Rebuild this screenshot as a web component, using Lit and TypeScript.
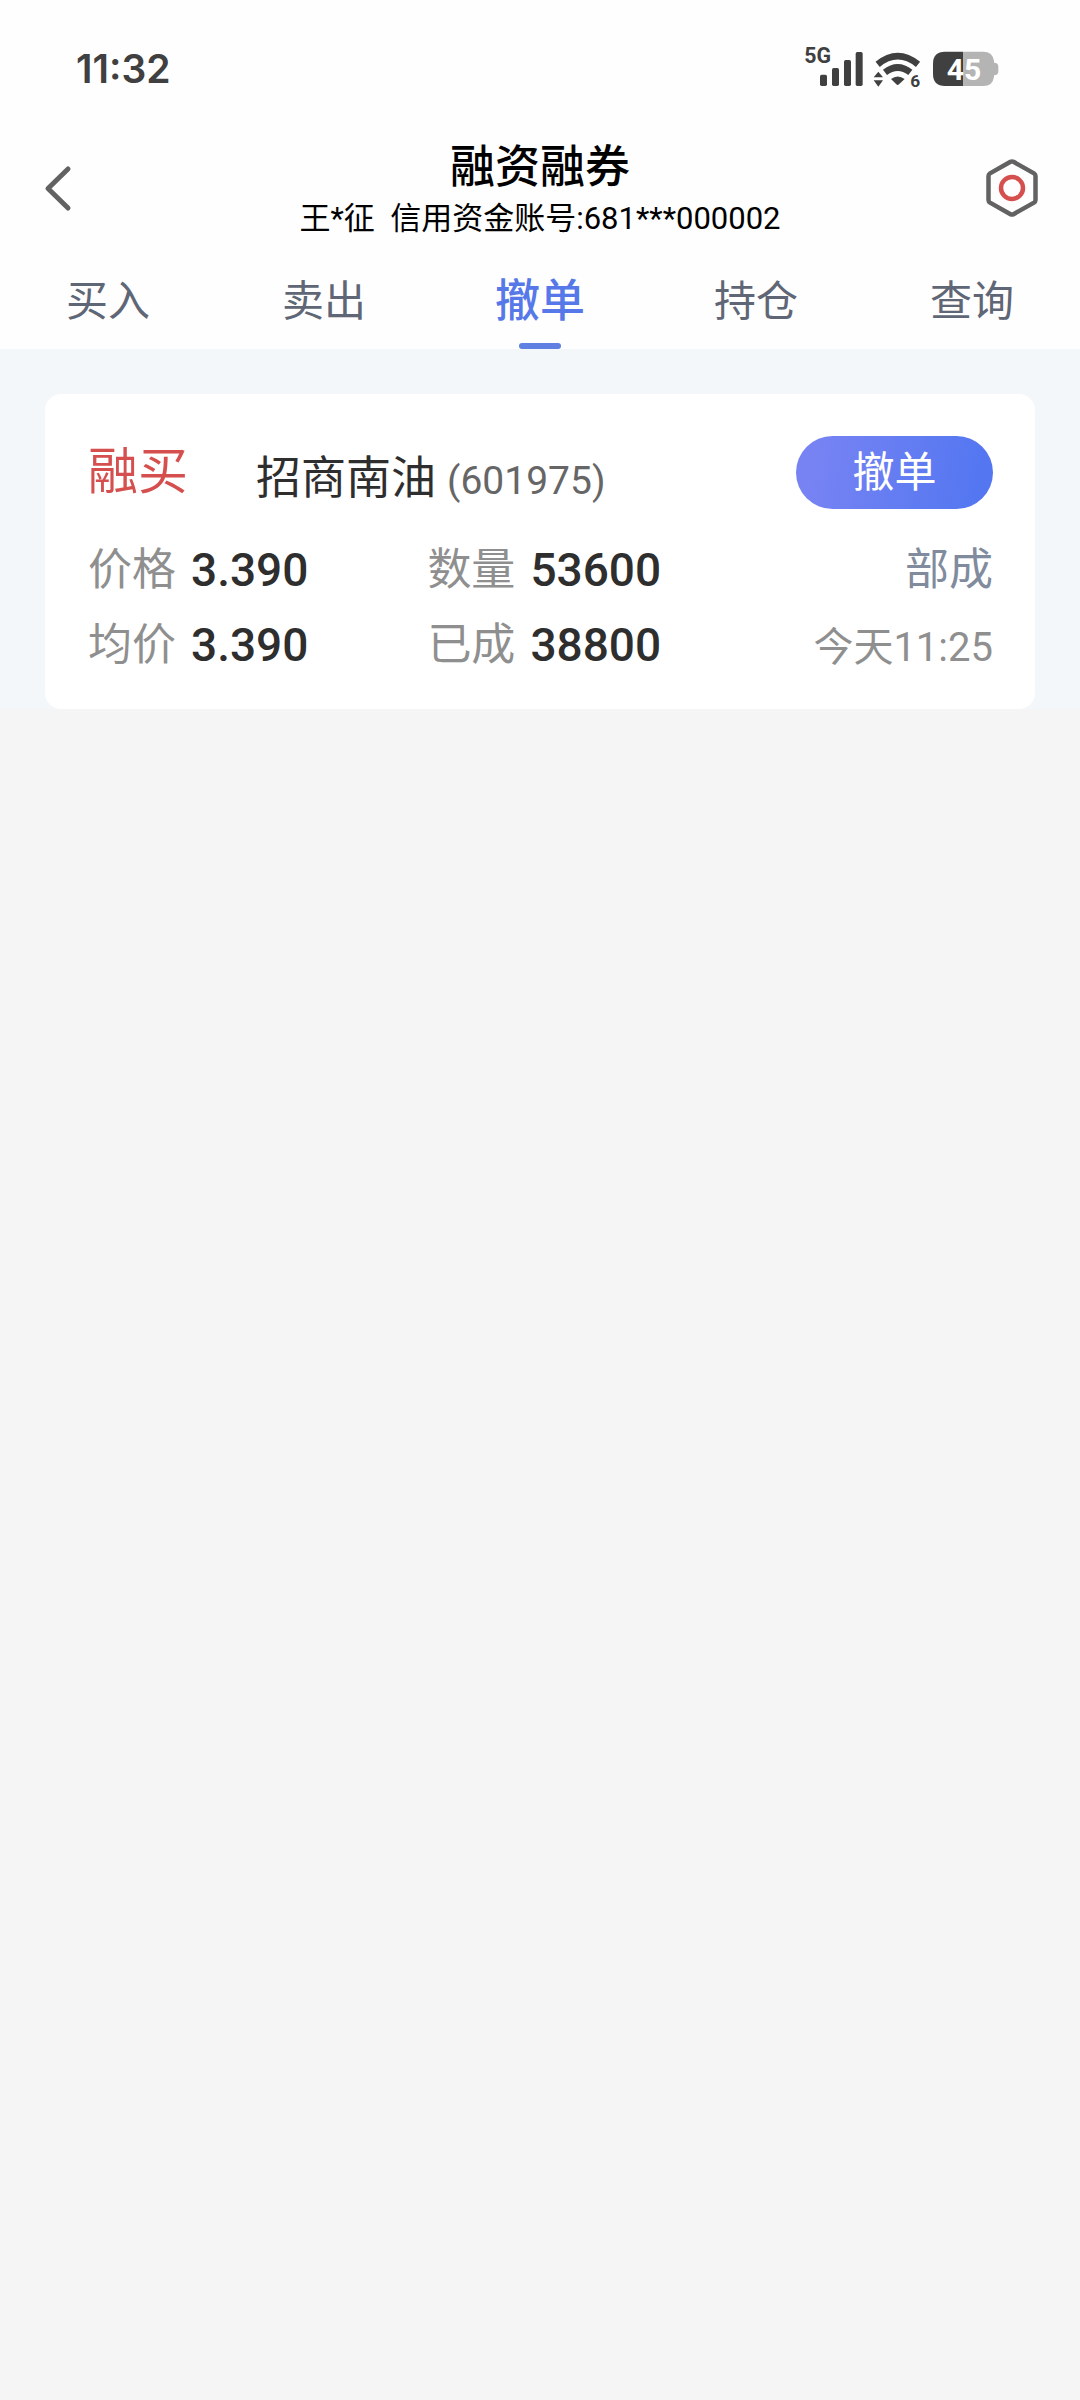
import { LitElement, html, css } from "lit";
import { customElement, property, state } from "lit/decorators.js";
import { classMap } from "lit/directives/class-map.js";

interface Order {
  side: string;
  name: string;
  code: string;
  price: string;
  quantity: string;
  average: string;
  filled: string;
  status: string;
  time: string;
}

const TABS = ["买入", "卖出", "撤单", "持仓", "查询"];

const ORDERS: Order[] = [
  {
    side: "融买",
    name: "招商南油",
    code: "601975",
    price: "3.390",
    quantity: "53600",
    average: "3.390",
    filled: "38800",
    status: "部成",
    time: "今天11:25",
  },
];

@customElement("status-bar")
export class StatusBar extends LitElement {
  static styles = css`
    :host {
      display: flex;
      align-items: center;
      justify-content: space-between;
      height: 136px;
      padding: 2px 81px 0 76px;
      box-sizing: border-box;
      color: #404040;
    }
    .clock {
      font: 600 39px/48px Inter, Roboto, sans-serif;
    }
    .icons {
      display: flex;
      gap: 11px;
    }
    .icon {
      display: block;
      height: 50px;
      fill: currentColor;
      overflow: visible;
    }
    .signal {
      width: 59px;
    }
    .wifi {
      width: 47px;
    }
    .battery {
      width: 67px;
    }
    .glyph {
      font-family: Roboto, sans-serif;
      font-weight: 700;
    }
    .network {
      font-size: 64px;
    }
    .generation {
      font-size: 52px;
    }
    .level {
      font-size: 90px;
      fill: #fff;
    }
    .rest {
      fill: #b4b4b4;
    }
    .arc {
      fill: none;
      stroke: currentColor;
      stroke-width: 20;
    }
  `;

  render() {
    return html`
      <time class="clock">11:32</time>
      <div class="icons">
        <svg class="icon signal" viewBox="72 42 177 150" role="img" aria-label="5G">
          <text class="glyph network" x="73" y="99">5G</text>
          <rect x="120" y="134" width="21" height="34" rx="5" />
          <rect x="156" y="114" width="21" height="54" rx="5" />
          <rect x="192" y="90" width="21" height="78" rx="5" />
          <rect x="227" y="66" width="21" height="102" rx="5" />
        </svg>
        <svg class="icon wifi" viewBox="282 42 141 150" role="img" aria-label="Wi-Fi 6">
          <path class="arc" d="M293 103Q353 54 414 103" />
          <path class="arc" d="M315 127Q353 98 391 127" />
          <path d="M333 147Q353 132 374 147L357 163Q353 167 349 163Z" />
          <path d="M295 125L309 142H281ZM281 151H309L295 170Z" />
          <text class="glyph generation" x="391" y="172">6</text>
        </svg>
        <svg class="icon battery" viewBox="456 42 201 150" role="img" aria-label="45%">
          <path
            class="rest"
            d="M549 65H610Q638 65 642 93V98Q655 98 655 110V124Q655 136 642 136V140Q638 168 610 168H549Z"
          />
          <path d="M549 65H495Q459 65 459 101V132Q459 168 495 168H549Z" />
          <text class="glyph level" x="552" y="149" text-anchor="middle">45</text>
        </svg>
      </div>
    `;
  }
}

@customElement("order-card")
export class OrderCard extends LitElement {
  @property({ attribute: false }) order!: Order;

  static styles = css`
    :host {
      display: block;
      padding: 42px 42px 26px 43px;
      border-radius: 16px;
      background: #fff;
    }
    .head {
      display: flex;
      align-items: center;
      margin-bottom: 24px;
    }
    .side {
      flex: none;
      width: 168px;
      font-size: 50px;
      line-height: 73px;
      color: #d64f4f;
    }
    .stock {
      flex: 1;
      margin: 0;
      padding-top: 12px;
      font-size: 45px;
      font-weight: 400;
      line-height: 61px;
      color: #2e2e2e;
    }
    .code {
      margin-left: 11px;
      font-size: 39px;
      line-height: 40px;
      color: #666;
    }
    .cancel {
      width: 197px;
      height: 73px;
      padding: 0 0 8px;
      border: 0;
      border-radius: 37px;
      background: linear-gradient(100deg, #7783f3 10%, #5477f1 90%);
      color: #fff;
      font: inherit;
      font-size: 42px;
    }
    .facts {
      display: grid;
      grid-template-columns: 3fr 3fr 2fr;
      margin: 0;
      line-height: 75px;
    }
    .fact {
      display: flex;
      gap: 15px;
      white-space: nowrap;
    }
    .label {
      font-size: 44px;
      color: #8f8f8f;
    }
    .value {
      margin: 0;
      font-size: 46px;
      font-weight: 500;
      color: #2e2e2e;
    }
    .note {
      justify-content: flex-end;
    }
    .status {
      margin: 0;
      font-size: 44px;
      color: #818b9e;
    }
    .time {
      margin: 0;
      padding-top: 4px;
      font-size: 40px;
      line-height: 71px;
      color: #8f8f8f;
    }
  `;

  private fact(label: string, value: string) {
    return html`<div class="fact">
      <dt class="label">${label}</dt>
      <dd class="value">${value}</dd>
    </div>`;
  }

  render() {
    const o = this.order;
    return html`
      <div class="head">
        <span class="side">${o.side}</span>
        <h2 class="stock">${o.name}<span class="code">(${o.code})</span></h2>
        <button class="cancel" type="button">撤单</button>
      </div>
      <dl class="facts">
        ${this.fact("价格", o.price)} ${this.fact("数量", o.quantity)}
        <div class="fact note"><dd class="status">${o.status}</dd></div>
        ${this.fact("均价", o.average)} ${this.fact("已成", o.filled)}
        <div class="fact note"><dd class="time">${o.time}</dd></div>
      </dl>
    `;
  }
}

@customElement("app-root")
export class AppRoot extends LitElement {
  @state() private active = 2;

  static styles = css`
    :host {
      display: block;
      min-height: 100vh;
      background: #f5f5f5;
      font-family: Roboto, "Noto Sans CJK SC", sans-serif;
    }
    .top {
      background: #fefefe;
    }
    .header {
      display: grid;
      grid-template-columns: 136px 1fr 136px;
      align-items: center;
      height: 104px;
    }
    .action {
      display: flex;
      align-items: center;
      height: 104px;
      padding: 0 40px;
      border: 0;
      background: none;
    }
    .settings {
      justify-content: flex-end;
    }
    .icon {
      flex: none;
      display: block;
      fill: none;
      stroke: #626262;
      stroke-linecap: round;
      stroke-linejoin: round;
    }
    .ring {
      stroke: #d64f4f;
    }
    .heading {
      text-align: center;
      color: #000;
    }
    .title {
      margin: 0;
      font-size: 45px;
      font-weight: 500;
      line-height: 62px;
    }
    .account {
      margin: 0;
      font-size: 31px;
      line-height: 40px;
      white-space: pre;
    }
    .tabs {
      display: grid;
      grid-template-columns: repeat(5, 1fr);
    }
    .tab {
      display: flex;
      flex-direction: column;
      align-items: center;
      justify-content: space-between;
      height: 109px;
      padding: 32px 0 0;
      border: 0;
      background: none;
      color: #5f6675;
      font: inherit;
      font-size: 42px;
      line-height: 60px;
    }
    .tab.active {
      color: #5678e8;
      font-size: 45px;
      font-weight: 500;
    }
    .tab.active::after {
      content: "";
      width: 42px;
      height: 6px;
      border-radius: 3px;
      background: #5f7fe3;
    }
    .orders {
      display: grid;
      gap: 24px;
      padding: 45px 45px 0;
      background: #f3f7fa;
    }
  `;

  render() {
    return html`
      <div class="top">
        <status-bar></status-bar>
        <header class="header">
          <button class="action" type="button" aria-label="返回">
            <svg class="icon" width="36" height="48" viewBox="0 0 36 48" stroke-width="5">
              <path d="M28 5L8 24.500L28 44" />
            </svg>
          </button>
          <div class="heading">
            <h1 class="title">融资融券</h1>
            <p class="account">${"王*征  信用资金账号:681***000002"}</p>
          </div>
          <button class="action settings" type="button" aria-label="设置">
            <svg class="icon" width="56" height="60" viewBox="0 0 56 60" stroke-width="4.500">
              <path
                d="M26.500 3.800Q28 3 29.500 3.800L50 15.400Q51.500 16.300 51.500 18V42Q51.500 43.700 50 44.600L29.500 56.200Q28 57 26.500 56.200L6 44.600Q4.500 43.700 4.500 42V18Q4.500 16.300 6 15.400Z"
              />
              <circle class="ring" cx="28" cy="30" r="11" />
            </svg>
          </button>
        </header>
        <nav class="tabs" aria-label="交易">
          ${TABS.map(
            (label, i) => html`<button
              type="button"
              class=${classMap({ tab: true, active: i === this.active })}
              @click=${() => (this.active = i)}
            >
              ${label}
            </button>`,
          )}
        </nav>
      </div>
      <main class="orders">
        ${ORDERS.map((order) => html`<order-card .order=${order}></order-card>`)}
      </main>
    `;
  }
}
